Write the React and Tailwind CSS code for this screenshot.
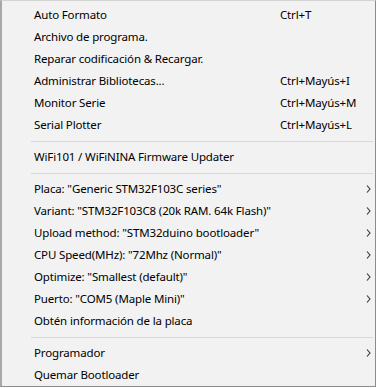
import React from 'react';

const items = [
  { label: 'Auto Formato', shortcut: 'Ctrl+T' },
  { label: 'Archivo de programa.' },
  { label: 'Reparar codificación & Recargar.' },
  { label: 'Administrar Bibliotecas...', shortcut: 'Ctrl+Mayús+I' },
  { label: 'Monitor Serie', shortcut: 'Ctrl+Mayús+M' },
  { label: 'Serial Plotter', shortcut: 'Ctrl+Mayús+L' },
  { sep: true },
  { label: 'WiFi101 / WiFiNINA Firmware Updater' },
  { sep: true },
  { label: 'Placa: "Generic STM32F103C series"', sub: true },
  { label: 'Variant: "STM32F103C8 (20k RAM. 64k Flash)"', sub: true },
  { label: 'Upload method: "STM32duino bootloader"', sub: true },
  { label: 'CPU Speed(MHz): "72Mhz (Normal)"', sub: true },
  { label: 'Optimize: "Smallest (default)"', sub: true },
  { label: 'Puerto: "COM5 (Maple Mini)"', sub: true },
  { label: 'Obtén información de la placa' },
  { sep: true },
  { label: 'Programador', sub: true },
  { label: 'Quemar Bootloader' },
];

const Chevron = () => (
  <svg width="5" height="8" viewBox="0 0 5 8" className="block">
    <path d="M1 0.5 L4 4 L1 7.5" fill="none" stroke="#333" strokeWidth="1.1" />
  </svg>
);

export default function App() {
  return (
    <div className="w-[377px] h-[388px] bg-white">
      <div
        className="w-[376px] h-[387px] bg-[#f2f2f2] border-t border-t-[#d4d4d4] border-l-2 border-l-[#a8a8a8] border-r border-r-[#8c8c8c] border-b border-b-[#8c8c8c] pt-[3px] text-[11.5px] tracking-[-0.15px] text-black"
        style={{ fontFamily: '"Segoe UI", "Noto Sans", "Open Sans", sans-serif' }}
      >
        {items.map((it, i) =>
          it.sep ? (
            <div key={i} className="h-[10px] flex items-center">
              <div className="ml-[29px] mr-[2px] h-px flex-1 bg-[#d7d7d7]" />
            </div>
          ) : (
            <div key={i} className="h-[22px] flex items-center pl-[32px] pr-[4px] leading-none">
              <span className="flex-1 whitespace-nowrap">{it.label}</span>
              {it.shortcut && <span className="w-[91px] whitespace-nowrap">{it.shortcut}</span>}
              {it.sub && <Chevron />}
            </div>
          )
        )}
      </div>
    </div>
  );
}
